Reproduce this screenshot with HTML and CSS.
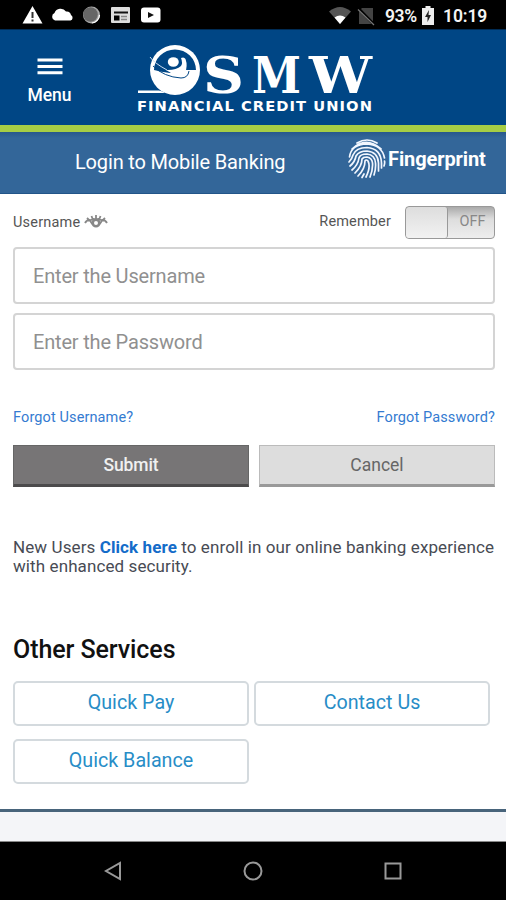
FILE: index.html
```html
<!DOCTYPE html>
<html lang="en">
<head>
<meta charset="utf-8">
<title>SMW Mobile Banking</title>
<link rel="stylesheet" href="styles.css">
</head>
<body>
<div class="screen">
  <div class="status">
    <svg class="status-left" width="140" height="20" viewBox="0 0 140 20" fill="#fff">
      <path d="M10.500 1 L20.500 18.500 H0.500Z"/><path d="M10.500 7v6M10.500 14.500v2" stroke="#333" stroke-width="2"/>
      <path d="M33 15.500a4 4 0 0 1-.5-7.500 6.500 6.500 0 0 1 11.500-1.500 4.500 4.500 0 0 1 5 3.500 3 3 0 0 1-.5 5.500Z"/>
      <circle cx="69.500" cy="10" r="8.500" fill="#aaa"/><circle cx="68.500" cy="9.500" r="7.300" fill="#666"/><path d="M70 18a8.500 8.500 0 0 0 7.500-8" fill="none" stroke="#fff" stroke-width="1.200"/>
      <rect x="89" y="2" width="19" height="16" rx="1" fill="#ddd"/><path d="M92 7.500h14" stroke="#111" stroke-width="2"/><path d="M99 11.500h6M99 14.500h6" stroke="#888" stroke-width="1.500"/><rect x="92" y="10.500" width="5.500" height="5" fill="#000"/>
      <rect x="119" y="2.500" width="19.500" height="15" rx="3"/><path d="M126 7l6 3-6 3Z" fill="#111"/>
    </svg>
    <div class="status-right">
      <svg width="48" height="20" viewBox="0 0 48 20"><path d="M0 5.500Q11 -3.500 22 5.500L11 18Z" fill="#555"/><path d="M5.500 11.500Q11 7.500 16.500 11.500L11 18Z" fill="#fff"/><path d="M33 2h11v16H30V5Z" fill="#444"/><path d="M29 2L45.500 19" stroke="#000" stroke-width="3"/><path d="M29 3.500L45 19" stroke="#777" stroke-width="1.200"/></svg>
      <span class="percent">93%</span>
      <svg class="battery" width="12" height="19" viewBox="0 0 12 19"><path d="M3.500 0h5v2H12v17H0V2h3.500Z" fill="#eee"/><path d="M7 4L3 11h2.500v5L9 9H6.500Z" fill="#222"/></svg>
      <span class="clock">10:19</span>
    </div>
  </div>
  <header class="header">
    <div class="menu">
      <svg width="26" height="18" viewBox="0 0 26 18"><path d="M.5 2h25M.5 8.500h25M.5 14.800h25" stroke="#fff" stroke-width="3"/></svg>
      <span>Menu</span>
    </div>
    <svg class="logo" width="238" height="72" viewBox="0 0 238 72" fill="#fff">
      <circle cx="39" cy="28" r="25"/>
      <path d="M18 28A21 20.500 0 0 1 60 28H50L34 31Q25 30 18 28Z" fill="#004685"/>
      <ellipse cx="37.300" cy="20" rx="5.500" ry="4.800"/>
      <path d="M45 16Q48 14.500 49.500 17Q52 24 49 31L40 34L30 28Q40 28.500 45 24Q47 21 45 16Z"/>
      <path d="M17 24Q28 35 45 36Q52 36 53 29" fill="none" stroke="#004685" stroke-width="1"/>
      <path d="M14 15Q18 21 31 28" fill="none" stroke="#cdddf0"/>
      <path d="M2 48.500H23Q27 49 29 51H2Z"/>
      <g class="logo-name">
        <text x="67" y="50.500" textLength="41" lengthAdjust="spacingAndGlyphs">S</text>
        <text x="116" y="50.500" textLength="49" lengthAdjust="spacingAndGlyphs">M</text>
        <text x="173" y="50.500" textLength="63" lengthAdjust="spacingAndGlyphs">W</text>
      </g>
      <text class="logo-tag" x="1" y="69" textLength="236" lengthAdjust="spacingAndGlyphs">FINANCIAL CREDIT UNION</text>
    </svg>
  </header>
  <div class="login-bar">
    <span class="login-title">Login to Mobile Banking</span>
    <div class="finger">
      <svg width="38" height="40" viewBox="0 0 38 40" fill="none" stroke="#f2f7ff" stroke-width="1.700" stroke-linecap="round">
        <path d="M9 4Q19-2 29 4M4 10Q18-3 33 10M1.500 18Q3 5.500 19 5Q34 6 36.500 19M1 23Q4 20 5 16Q8 8.500 19 8.500Q33 9.500 33.500 24V29M2 27Q7 23 8 17Q11 12 19 12Q30 13 30.500 24V32M4 31Q10 26 11 19Q12 15 19 15Q27 16 27.500 24Q28 30 26 36M7 34Q14 27 14 20Q15 18 19 18Q24 19 24.500 24Q25 31 22 38M10 37Q17 30 17 22Q18 20 20 22Q23 28 18 38M36.500 22Q37 24 36 27M14 38.500L16 35"/>
      </svg>
      <span>Fingerprint</span>
    </div>
  </div>
  <main class="content">
    <div class="user-row">
      <span class="label">Username</span>
      <svg class="eye" width="24" height="14" viewBox="0 0 24 14" fill="none" stroke="#888" stroke-width="1.800"><path d="M1 8Q3 4 7 5Q12 3 17 5Q21 4 23 8M3 3l3 3M7.500 1l1.500 4M12 0v4M16.500 1L15 5M21 3l-3 3M6 5Q7 8 8.500 9M18 5Q17 8 15.500 9"/><circle cx="12" cy="8" r="3.300" stroke-width="2.600"/></svg>
      <span class="label remember">Remember</span>
      <div class="toggle"><span class="knob"></span><span class="off">OFF</span></div>
    </div>
    <div class="field"><span>Enter the Username</span></div>
    <div class="field second"><span>Enter the Password</span></div>
    <div class="forgot"><a>Forgot Username?</a><a>Forgot Password?</a></div>
    <div class="actions"><div class="btn submit">Submit</div><div class="btn cancel">Cancel</div></div>
    <p class="enroll">New Users <b>Click here</b> to enroll in our online banking experience<br>with enhanced security.</p>
    <h2>Other Services</h2>
    <div class="services"><div>Quick Pay</div><div>Contact Us</div><div>Quick Balance</div></div>
  </main>
  <div class="footer"></div>
  <nav class="nav">
    <svg width="18" height="20" viewBox="0 0 18 20"><path d="M16 2v16L2 10Z"/></svg>
    <svg width="20" height="20" viewBox="0 0 20 20"><circle cx="10" cy="10" r="8.500"/></svg>
    <svg width="18" height="20" viewBox="0 0 18 20"><rect x="1.500" y="2.500" width="15" height="15"/></svg>
  </nav>
</div>
</body>
</html>
```
FILE: styles.css
```css
* { box-sizing: border-box; }
body { margin: 0; font-family: Roboto, "Liberation Sans", sans-serif; background: #fff; }
svg { display: block; flex: none; }
.screen { width: 506px; height: 900px; overflow: hidden; display: flex; flex-direction: column; }
.status { height: 30px; flex: none; background: #000; border-bottom: 1px solid #002c55; display: flex; justify-content: space-between; padding: 5px 19px 0 22px; }
.status-right { display: flex; height: 21px; align-items: center; color: #f4f4f4; font-size: 17.500px; font-weight: 600; line-height: 20px; }
.percent { margin-left: 8px; width: 32px; letter-spacing: -.4px; }
.battery { margin-left: 5px; }
.clock { margin-left: 9px; width: 44px; letter-spacing: -.1px; }
.header { height: 102px; flex: none; background: #004685; border-bottom: 7px solid #a6cd45; display: flex; }
.menu { width: 99px; padding-top: 28px; display: flex; flex-direction: column; align-items: center; color: #fff; font-size: 17.500px; font-weight: 500; line-height: 22px; }
.menu span { margin-top: 8px; letter-spacing: -.1px; }
.logo { margin: 12px 0 0 37px; }
.logo-name { font: 700 50px "DejaVu Serif", serif; }
.logo-tag { font: 700 14px "DejaVu Sans", sans-serif; letter-spacing: 1px; }
.login-bar { height: 62px; flex: none; background: linear-gradient(#28588c, #336699 6px); border-bottom: 1px solid #225588; color: #fff; display: flex; padding-left: 75px; }
.login-title { width: 273px; font-size: 20px; letter-spacing: -.16px; line-height: 24px; padding-top: 18px; }
.finger { display: flex; font-size: 20px; font-weight: 700; line-height: 24px; padding-top: 7px; }
.finger span { margin: 8px 0 0 2px; letter-spacing: -.1px; }
.content { height: 615px; flex: none; padding: 12px 11px 0 13px; }
.user-row { height: 34px; display: flex; align-items: center; }
.label { font-size: 14.500px; color: #555; line-height: 20px; margin-top: -1px; letter-spacing: .2px; }
.eye { margin: -3px 0 0 4px; }
.remember { margin-left: auto; margin-right: 14px; margin-top: -3px; letter-spacing: .15px; }
.toggle { width: 90px; height: 33px; margin-top: -1px; border: 1px solid #999; border-radius: 4px; display: flex; background: linear-gradient(#aaa, #ddd 12px, #eee); overflow: hidden; }
.knob { width: 42px; background: linear-gradient(#ddd, #f2f2f2); border-right: 1px solid #999; border-radius: 3px; }
.off { flex: 1; text-align: center; color: #888; font-size: 14.500px; line-height: 30px; padding-left: 3px; }
.field { height: 57px; margin-top: 7px; border: 2px solid #d4d4d4; border-radius: 4px; padding-left: 18px; font-size: 20px; letter-spacing: -.18px; line-height: 54px; color: #909090; }
.field.second { margin-top: 9px; }
.forgot { display: flex; justify-content: space-between; margin-top: 38px; font-size: 14.500px; letter-spacing: .12px; line-height: 20px; color: #347bd1; }
.actions { display: grid; grid-template-columns: 236px 236px; gap: 10px; margin-top: 17px; }
.btn { height: 42px; text-align: center; font-size: 17.500px; line-height: 38px; }
.submit { background: #777576; color: #f0f0f0; font-weight: 500; letter-spacing: -.1px; border: 1px solid #666; border-bottom: 3px solid #4c4b4c; }
.cancel { background: #ddd; color: #666; border: 1px solid #bbb; border-bottom: 3px solid #999; }
.enroll { margin: 51px -8px 0 0; font-size: 17px; letter-spacing: .1px; line-height: 19px; color: #484b54; white-space: nowrap; }
.enroll b { color: #146cc9; }
h2 { margin: 59px 0 0; font-size: 25px; letter-spacing: -.08px; line-height: 30px; font-weight: 500; color: #111; }
.services { display: grid; grid-template-columns: 236px 236px; column-gap: 5px; row-gap: 13px; margin-top: 16px; }
.services div { height: 45px; border: 2px solid #d4dade; border-radius: 5px; text-align: center; font-size: 19.700px; line-height: 39px; color: #288dc7; }
.footer { height: 33px; flex: none; border-top: 3px solid #48647b; border-bottom: 1px solid #888; background: #f4f5f8; }
.nav { flex: 1; background: #000; display: flex; gap: 121px; padding: 19px 0 0 104px; }
.nav svg { fill: none; stroke: #999; stroke-width: 2; }
```
